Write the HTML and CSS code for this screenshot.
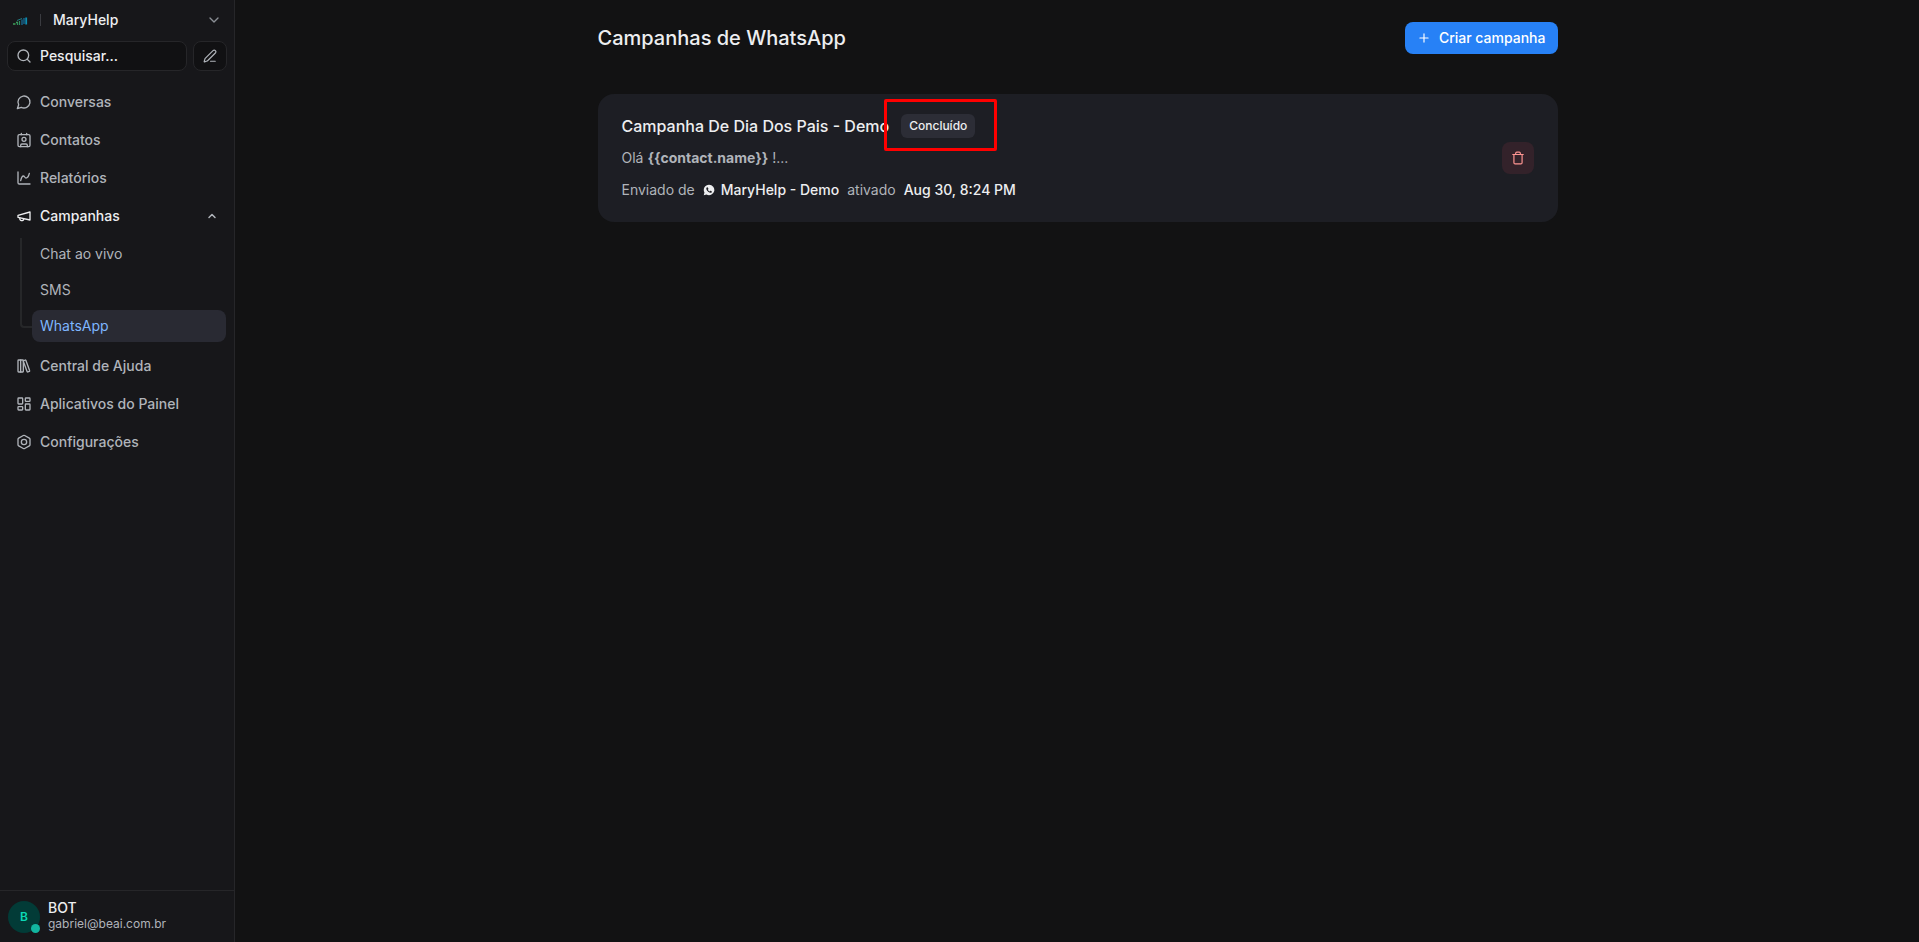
FILE: index.html
```
<!DOCTYPE html>
<html lang="pt-BR">
<head>
    <meta charset="UTF-8">
    <meta name="viewport" content="width=device-width, initial-scale=1.0">
    <title>MaryHelp</title>
    <link rel="stylesheet" href="styles.css">
</head>
<body>
    <aside class="sidebar">
        <div class="account">
            <svg class="logo" viewBox="0 0 16 10">
                <path d="M1 8h2.500M4 6.500h2" stroke="#3fa05a" stroke-width="1.300"/>
                <path d="M5.500 9V6.500M7.500 9V5" stroke="#2f8f5e" stroke-width="1.200"/>
                <path d="M5 4.500l5-2" stroke="#227a80" stroke-width="1"/>
                <path d="M10 9V3.500M12 8V2" stroke="#17668f" stroke-width="1.400"/>
                <path d="M14.200 8.500V1.500" stroke="#0d8fb5" stroke-width="1.800"/>
            </svg>
            <span class="divider"></span>
            <button class="account-btn">
                MaryHelp
                <svg class="icon" viewBox="0 0 24 24"><path d="m6 9 6 6 6-6"/></svg>
            </button>
        </div>

        <div class="search-row">
            <button class="search-btn">
                <svg class="icon" viewBox="0 0 24 24"><circle cx="11" cy="11" r="8"/><path d="m21 21-4.300-4.300"/></svg>
                Pesquisar...
            </button>
            <button class="compose-btn" aria-label="Nova mensagem">
                <svg class="icon small" viewBox="0 0 24 24"><path d="M13 21h8"/><path d="M21.174 6.812a1 1 0 0 0-3.986-3.987L3.842 16.174a2 2 0 0 0-.5.83l-1.321 4.352a.5.5 0 0 0 .623.622l4.353-1.320a2 2 0 0 0 .83-.497z"/></svg>
            </button>
        </div>

        <nav class="menu">
            <a class="menu-item" href="#">
                <svg class="icon" viewBox="0 0 24 24"><path d="M7.900 20A9 9 0 1 0 4 16.100L2 22Z"/></svg>
                Conversas
            </a>
            <a class="menu-item" href="#">
                <svg class="icon" viewBox="0 0 24 24"><path d="M16 2v2M8 2v2M7 22v-2a2 2 0 0 1 2-2h6a2 2 0 0 1 2 2v2"/><circle cx="12" cy="11" r="3"/><rect x="3" y="4" width="18" height="18" rx="2"/></svg>
                Contatos
            </a>
            <a class="menu-item" href="#">
                <svg class="icon" viewBox="0 0 24 24"><path d="M3 3v16a2 2 0 0 0 2 2h16"/><path d="M7 16c.5-2 1.500-7 4-7 2 0 2 3 4 3 2.500 0 4.500-5 5-7"/></svg>
                Relatórios
            </a>
            <button class="menu-item open" aria-expanded="true">
                <svg class="icon" viewBox="0 0 24 24"><path d="m3 11 18-5v12L3 14v-3z"/><path d="M11.600 16.800a3 3 0 1 1-5.800-1.600"/></svg>
                Campanhas
                <svg class="icon arrow" viewBox="0 0 24 24"><path d="m6 15 6-6 6 6"/></svg>
            </button>
            <div class="submenu">
                <a class="submenu-item" href="#">Chat ao vivo</a>
                <a class="submenu-item" href="#">SMS</a>
                <a class="submenu-item active" href="#">WhatsApp</a>
            </div>
            <a class="menu-item" href="#">
                <svg class="icon" viewBox="0 0 24 24"><rect x="3" y="3" width="8" height="18" rx="1"/><path d="M7 3v18"/><path d="M20.400 18.900c.2.5-.1 1.100-.6 1.300l-1.900.7c-.5.2-1.100-.1-1.300-.6L11.100 5.100c-.2-.5.1-1.100.6-1.300l1.900-.7c.5-.2 1.100.1 1.300.6Z"/></svg>
                Central de Ajuda
            </a>
            <a class="menu-item" href="#">
                <svg class="icon" viewBox="0 0 24 24"><rect x="3" y="3" width="7" height="9" rx="1"/><rect x="14" y="3" width="7" height="5" rx="1"/><rect x="14" y="12" width="7" height="9" rx="1"/><rect x="3" y="16" width="7" height="5" rx="1"/></svg>
                Aplicativos do Painel
            </a>
            <a class="menu-item" href="#">
                <svg class="icon" viewBox="0 0 24 24"><path d="M21 16V8a2 2 0 0 0-1-1.730l-7-4a2 2 0 0 0-2 0l-7 4A2 2 0 0 0 3 8v8a2 2 0 0 0 1 1.730l7 4a2 2 0 0 0 2 0l7-4A2 2 0 0 0 21 16z"/><circle cx="12" cy="12" r="4"/></svg>
                Configurações
            </a>
        </nav>

        <button class="profile">
            <span class="avatar">B<span class="status"></span></span>
            <span class="profile-info">
                <span class="profile-name">BOT</span>
                <span class="profile-email">gabriel@beai.com.br</span>
            </span>
        </button>
    </aside>

    <main class="content">
        <header class="page-header">
            <h1>Campanhas de WhatsApp</h1>
            <button class="create-btn">
                <svg class="icon small" viewBox="0 0 24 24"><path d="M5 12h14M12 5v14"/></svg>
                Criar campanha
            </button>
        </header>

        <article class="card">
            <div class="card-body">
                <div class="card-title">
                    <h2>Campanha De Dia Dos Pais - Demo</h2>
                    <span class="badge">Concluído<span class="highlight"></span></span>
                </div>
                <p class="message">Olá <strong>{{contact.name}}</strong> !...</p>
                <div class="sent">
                    <span>Enviado de</span>
                    <span class="inbox">
                        <svg class="whatsapp" viewBox="0 0 24 24"><path fill="#edeef0" d="M12 1.500a10.500 10.500 0 0 0-9.100 15.700L1.500 22.500l5.400-1.400A10.500 10.500 0 1 0 12 1.500z"/><path fill="#1d1e24" d="M8.600 6.500c-.9 0-2 1.200-2 2.700 0 3.700 5 8.500 8.700 8.500 1.500 0 2.500-1.100 2.500-2.100 0-.7-2.300-2-2.900-2-.6 0-1 1.200-1.600 1.200-1 0-3.500-2.300-3.500-3.300 0-.5 1-.9 1-1.500 0-.7-1-3.500-2.200-3.500z"/></svg>
                        <b>MaryHelp - Demo</b>
                    </span>
                    <span>ativado</span>
                    <b>Aug 30, 8:24 PM</b>
                </div>
            </div>
            <button class="delete-btn" aria-label="Excluir campanha">
                <svg class="icon small" viewBox="0 0 24 24"><path d="M3 6h18M19 6v14a2 2 0 0 1-2 2H7a2 2 0 0 1-2-2V6M8 6V4a2 2 0 0 1 2-2h4a2 2 0 0 1 2 2v2"/></svg>
            </button>
        </article>
    </main>
</body>
</html>
```
FILE: styles.css
```
* {
    box-sizing: border-box;
}

body {
    margin: 0;
    display: flex;
    min-height: 100vh;
    background-color: #121213;
    color: #edeef0;
    font-family: Inter, sans-serif;
    font-size: 14px;
    line-height: 20px;
}

h1, h2, p {
    margin: 0;
    font-weight: 500;
}

a {
    color: inherit;
    text-decoration: none;
}

button {
    padding: 0;
    border: 0;
    background: none;
    color: inherit;
    font: inherit;
    cursor: pointer;
}

b {
    font-weight: 500;
}

.icon {
    width: 16px;
    height: 16px;
    flex-shrink: 0;
    fill: none;
    stroke: currentColor;
    stroke-width: 2;
    stroke-linecap: round;
    stroke-linejoin: round;
}

.icon.small {
    width: 14px;
    height: 14px;
}

/* sidebar */
.sidebar {
    display: flex;
    flex-direction: column;
    width: 235px;
    flex-shrink: 0;
    background-color: #17171a;
    border-right: 1px solid #262629;
}

.account {
    display: flex;
    align-items: center;
    padding: 0 12px;
    height: 40px;
    margin-bottom: 1px;
}

.logo {
    width: 16px;
    height: 10px;
    margin-top: 2px;
    fill: none;
}

.divider {
    width: 1px;
    height: 12px;
    margin: 0 12px;
    background-color: #3a3b40;
}

.account-btn {
    flex: 1;
    display: flex;
    justify-content: space-between;
    align-items: center;
    font-weight: 500;
}

.account-btn .icon {
    color: #8b8f96;
}

.search-row {
    display: flex;
    gap: 6px;
    padding: 0 7px;
}

.search-btn,
.compose-btn {
    display: flex;
    align-items: center;
    height: 30px;
    border: 1px solid #262629;
    border-radius: 8px;
    background-color: #111113;
}

.search-btn {
    flex: 1;
    gap: 8px;
    padding: 0 8px;
    font-weight: 500;
}

.search-btn .icon,
.compose-btn .icon {
    color: #b0b4ba;
}

.compose-btn {
    justify-content: center;
    width: 34px;
}

.menu {
    flex: 1;
    display: flex;
    flex-direction: column;
    gap: 6px;
    padding: 15px 8px;
    color: #b0b4ba;
}

.menu-item {
    display: flex;
    align-items: center;
    gap: 8px;
    height: 32px;
    padding: 0 8px;
    font-weight: 500;
}

.menu-item.open {
    color: #edeef0;
}

.arrow {
    width: 12px;
    height: 12px;
    margin-left: auto;
    stroke-width: 3;
    color: #b0b4ba;
}

.submenu {
    position: relative;
    display: flex;
    flex-direction: column;
    gap: 4px;
    margin-bottom: 2px;
    padding-left: 24px;
}

/* tree line */
.submenu::before {
    content: "";
    position: absolute;
    top: 0;
    left: 12px;
    bottom: 14px;
    width: 10px;
    border-left: 2px solid #262729;
    border-bottom: 2px solid #262729;
    border-bottom-left-radius: 4px;
}

.submenu-item {
    padding: 6px 8px;
    border-radius: 8px;
}

.submenu-item.active {
    background-color: #292a33;
    color: #7eb6ff;
}

.profile {
    display: flex;
    align-items: center;
    gap: 8px;
    padding: 8px;
    height: 52px;
    border-top: 1px solid #262629;
    text-align: left;
}

.avatar {
    position: relative;
    display: flex;
    align-items: center;
    justify-content: center;
    width: 32px;
    height: 32px;
    border-radius: 50%;
    background-color: #023b37;
    color: #0bd8b6;
    font-size: 12px;
    font-weight: 600;
}

.status {
    position: absolute;
    right: 0;
    bottom: 0;
    width: 9px;
    height: 9px;
    border-radius: 50%;
    background-color: #12b5a0;
}

.profile-info {
    display: flex;
    flex-direction: column;
    padding-bottom: 2px;
    line-height: 16px;
}

.profile-name {
    font-weight: 500;
}

.profile-email {
    color: #b0b4ba;
    font-size: 12px;
}

/* campaigns */
.content {
    flex: 1;
    padding: 0 23px 0 24px;
}

.page-header,
.card {
    display: flex;
    align-items: center;
    justify-content: space-between;
    max-width: 960px;
    margin: 0 auto;
}

.page-header {
    height: 76px;
}

.page-header h1 {
    font-size: 20px;
    line-height: 28px;
}

.create-btn {
    display: flex;
    align-items: center;
    gap: 8px;
    height: 32px;
    padding: 0 12px;
    border-radius: 8px;
    background-color: #2781f6;
    color: #fff;
    font-weight: 500;
}

.card {
    margin-top: 18px;
    padding: 20px 24px;
    border-radius: 16px;
    background-color: #1d1e24;
}

.card-body {
    display: flex;
    flex-direction: column;
    gap: 8px;
    color: #b0b4ba;
    line-height: 24px;
}

.card-title {
    display: flex;
    align-items: center;
    gap: 12px;
    color: #edeef0;
}

.card-title h2 {
    font-size: 16px;
}

.badge {
    position: relative;
    padding: 0 8px;
    border-radius: 6px;
    background-color: #2c2d36;
    font-size: 12px;
    font-weight: 500;
}

.highlight {
    position: absolute;
    top: -15px;
    right: -22px;
    bottom: -13px;
    left: -17px;
    border: 3px solid #f00;
    border-radius: 2px;
}

.message {
    font-weight: 400;
}

.message strong {
    font-weight: 700;
}

.sent {
    display: flex;
    align-items: center;
    gap: 8px;
}

.sent b {
    color: #edeef0;
}

.inbox {
    display: flex;
    align-items: center;
    gap: 6px;
}

.whatsapp {
    width: 12px;
    height: 12px;
}

.delete-btn {
    display: flex;
    align-items: center;
    justify-content: center;
    width: 32px;
    height: 32px;
    border-radius: 8px;
    background-color: #33222a;
    color: #ff9592;
}
```
